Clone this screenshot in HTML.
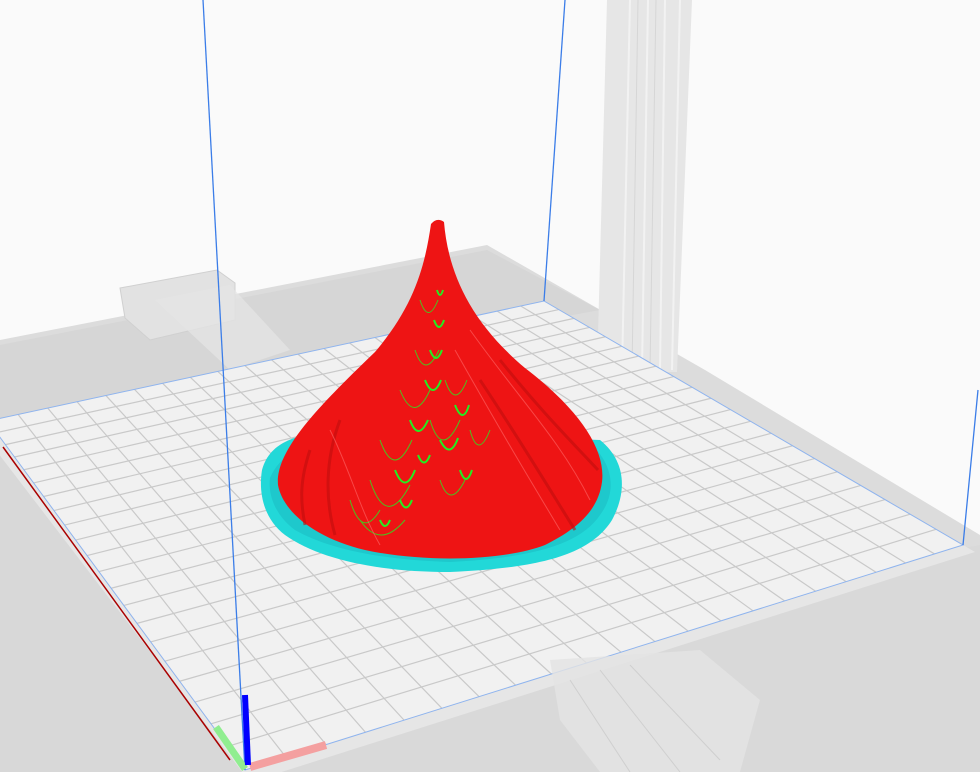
<!DOCTYPE html>
<html><head><meta charset="utf-8"><style>
html,body{margin:0;padding:0;background:#fafafa;width:980px;height:772px;overflow:hidden}
svg{display:block}
</style></head><body>
<svg id="s" width="980" height="772" viewBox="0 0 980 772" xmlns="http://www.w3.org/2000/svg">
<rect width="980" height="772" fill="#fafafa"/>
<!-- printer base -->
<polygon points="0,340 487,245 705,370 980,535 980,772 0,772" fill="#dcdcdc"/>
<polygon points="0,345 487,250 600,310 0,420" fill="#d6d6d6"/>
<!-- left carriage -->
<polygon points="120,288 217,270 235,283 235,320 150,340 125,318" fill="#e2e2e2" stroke="#d0d0d0"/>
<polygon points="155,300 230,285 290,350 230,370" fill="#e6e6e6" opacity="0.7"/>
<!-- column -->
<polygon points="607,0 692,0 677,372 597,372" fill="#e6e6e6"/>
<g stroke="#f4f4f4" stroke-width="2" opacity="0.9">
<line x1="630" y1="0" x2="622" y2="370"/><line x1="648" y1="0" x2="642" y2="370"/><line x1="665" y1="0" x2="660" y2="370"/><line x1="680" y1="0" x2="672" y2="370"/>
</g>
<g stroke="#d6d6d6" stroke-width="1"><line x1="638" y1="0" x2="632" y2="370"/><line x1="656" y1="0" x2="650" y2="370"/></g>
<!-- floor right/bottom -->
<polygon points="245,772 963,548 980,545 980,772" fill="#d9d9d9"/>
<polygon points="0,430 245,772 0,772" fill="#d8d8d8"/>
<!-- plate thickness -->
<polygon points="-12,421 245,770 963,545 975,552 250,782 -12,440" fill="#e6e6e6"/>
<!-- plate -->
<polygon points="-12,421 544,301 963,545 245,770" fill="#f1f1f1"/>
<g id="grid" stroke="#c9c9c9" stroke-width="1.2" fill="none"></g>
<polygon points="-12,421 544,301 963,545 245,770" fill="none" stroke="#8fb4ee" stroke-width="1"/>
<line x1="3" y1="447" x2="230" y2="760" stroke="#aa0000" stroke-width="1.5"/>
<!-- bottom carriage -->
<polygon points="550,660 700,650 760,700 740,772 600,772 560,720" fill="#e4e4e4" opacity="0.8"/>
<g stroke="#cfcfcf" stroke-width="1"><line x1="570" y1="680" x2="630" y2="772"/><line x1="600" y1="670" x2="680" y2="772"/><line x1="630" y1="665" x2="720" y2="760"/></g>
<!-- blue verticals -->
<line x1="203" y1="0" x2="245" y2="770" stroke="#3b7de8" stroke-width="1.3"/>
<line x1="565" y1="0" x2="544" y2="301" stroke="#3b7de8" stroke-width="1.3"/>
<line x1="978" y1="390" x2="963" y2="545" stroke="#3b7de8" stroke-width="1.3"/>
<!-- brim -->
<path d="M262,470 C270,440 300,435 330,430 L600,440 C625,460 628,490 612,520 C590,555 540,568 450,572 C380,572 320,560 285,535 C265,520 258,495 262,470Z" fill="#22d8d8"/>
<path d="M270,478 C280,455 300,445 330,440 L595,448 C615,470 615,495 600,515 C580,545 530,558 450,562 C385,560 330,550 295,530 C275,515 268,495 270,478Z" fill="#19b8c0" opacity="0.5"/>
<!-- cone -->
<path d="M431,224 Q437,217 444,222 C448,270 468,320 525,368 C580,410 606,450 602,482 C598,512 575,530 545,545 C500,562 420,562 365,550 C315,538 283,512 278,485 C275,450 320,405 375,352 C415,305 425,265 431,224Z" fill="#ee1414"/>
<g fill="none" stroke="#c00e0e" stroke-width="3" opacity="0.6">
<path d="M500,360 C540,410 570,440 598,470"/><path d="M480,380 C520,440 550,490 575,530"/><path d="M340,420 C325,460 325,500 335,535"/><path d="M310,450 C300,480 300,500 305,525"/>
</g>
<g fill="none" stroke="#22ee22" stroke-width="2">
<path d="M395,470 q10,25 20,0"/><path d="M410,420 q8,22 18,0"/><path d="M425,380 q8,20 16,0"/><path d="M430,350 q6,16 12,0"/>
<path d="M380,520 q5,12 10,0"/><path d="M440,440 q10,20 18,-2"/><path d="M400,500 q6,15 12,0"/><path d="M418,455 q6,15 12,0"/>
<path d="M455,405 q8,20 14,0"/><path d="M460,470 q6,18 12,0"/><path d="M434,320 q5,14 10,0"/><path d="M437,290 q3,10 6,0"/>
</g>
<g fill="none" stroke="#22ee22" stroke-width="1" opacity="0.8">
<path d="M380,440 q14,40 32,0"/><path d="M370,480 q16,50 40,5"/><path d="M400,390 q14,35 30,0"/><path d="M415,350 q10,30 24,0"/>
<path d="M430,420 q12,40 30,0"/><path d="M445,380 q10,30 22,0"/><path d="M360,520 q20,30 45,0"/><path d="M470,430 q8,30 20,0"/>
<path d="M420,300 q8,25 18,0"/><path d="M440,480 q10,30 25,0"/><path d="M350,500 q12,40 30,10"/>
</g>
<g fill="none" stroke="#ff6a6a" stroke-width="1" opacity="0.6">
<path d="M470,330 C520,400 560,440 590,500"/><path d="M455,350 C500,430 530,480 560,530"/><path d="M330,430 C350,470 360,510 380,545"/>
</g>
<!-- axes -->
<line x1="216" y1="727" x2="245" y2="769" stroke="#90ee90" stroke-width="7"/>
<line x1="250" y1="767" x2="326" y2="745" stroke="#f4a0a0" stroke-width="8"/>
<line x1="245" y1="695" x2="248" y2="765" stroke="#0000ff" stroke-width="6"/>
</svg>
<script>
(function(){
var P=[[-12,421],[544,301],[963,545],[245,770]];
function H(p){var x0=p[0][0],y0=p[0][1],x1=p[1][0],y1=p[1][1],x2=p[2][0],y2=p[2][1],x3=p[3][0],y3=p[3][1];
var dx1=x1-x2,dx2=x3-x2,dy1=y1-y2,dy2=y3-y2,sx=x0-x1+x2-x3,sy=y0-y1+y2-y3;
var den=dx1*dy2-dx2*dy1;var g=(sx*dy2-dx2*sy)/den,h=(dx1*sy-sx*dy1)/den;
return [x1-x0+g*x1,x3-x0+h*x3,x0,y1-y0+g*y1,y3-y0+h*y3,y0,g,h];}
var m=H(P);
function pt(u,v){var w=m[6]*u+m[7]*v+1;return [(m[0]*u+m[1]*v+m[2])/w,(m[3]*u+m[4]*v+m[5])/w];}
var N=21,s='';
for(var i=1;i<N;i++){var t=i/N;var a=pt(t,0),b=pt(t,1);s+='<line x1="'+a[0]+'" y1="'+a[1]+'" x2="'+b[0]+'" y2="'+b[1]+'"/>';
a=pt(0,t);b=pt(1,t);s+='<line x1="'+a[0]+'" y1="'+a[1]+'" x2="'+b[0]+'" y2="'+b[1]+'"/>';}
document.getElementById('grid').innerHTML=s;
})();
</script>
</body></html>
